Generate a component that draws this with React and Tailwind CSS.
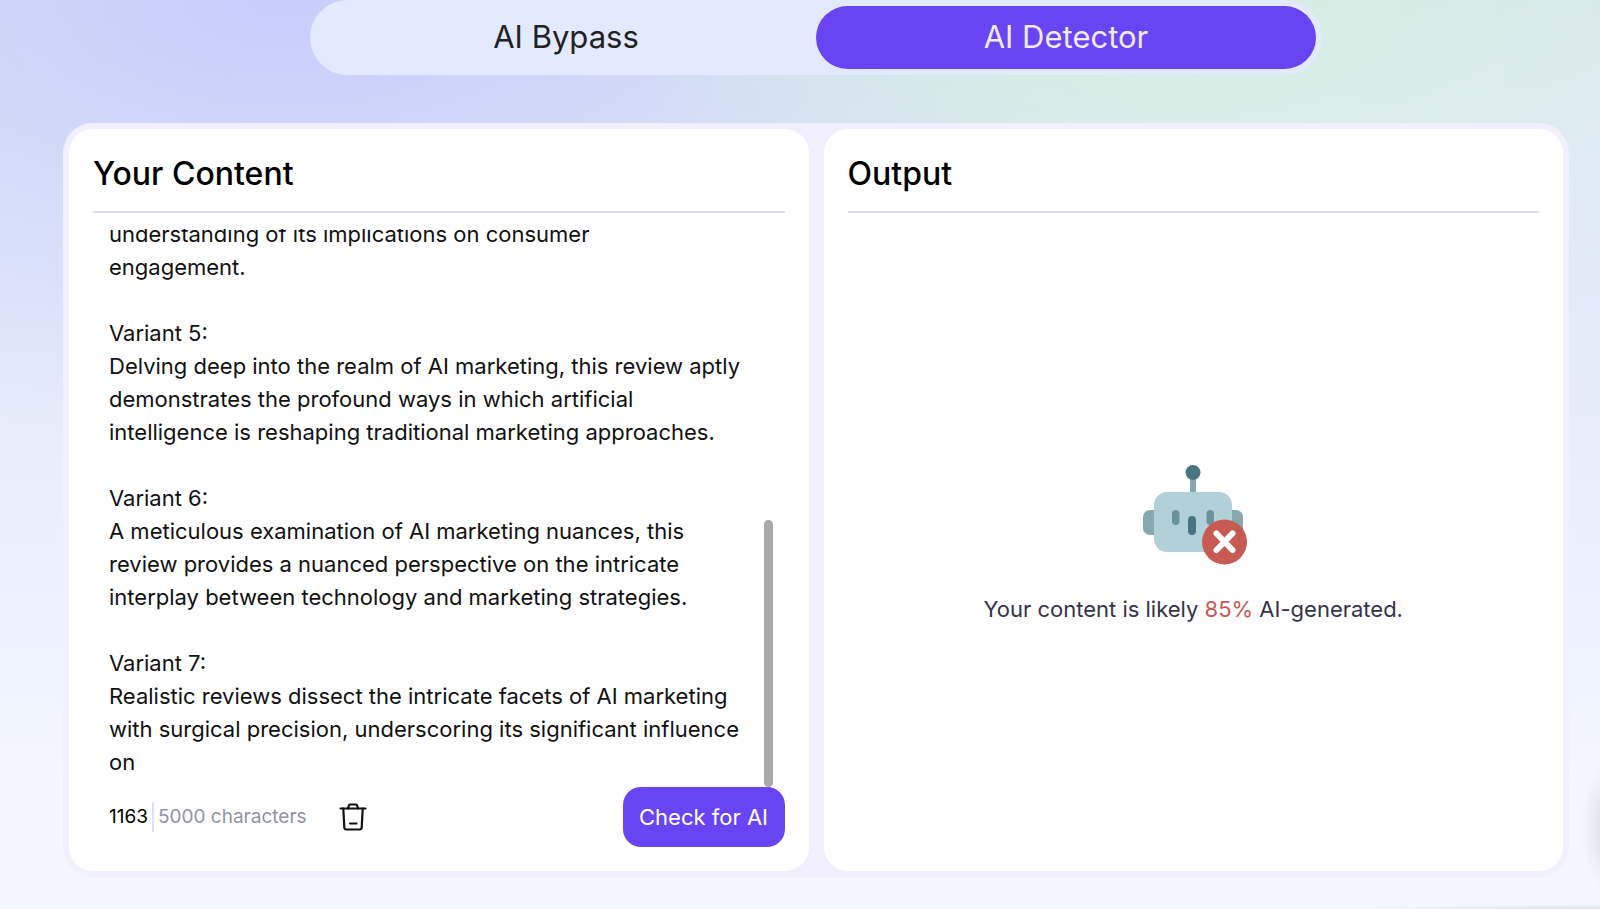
import React, { useEffect, useRef, useState } from 'react';

const SAMPLE_TEXT = `understanding of its implications on consumer
engagement.

Variant 5:
Delving deep into the realm of AI marketing, this review aptly
demonstrates the profound ways in which artificial
intelligence is reshaping traditional marketing approaches.

Variant 6:
A meticulous examination of AI marketing nuances, this
review provides a nuanced perspective on the intricate
interplay between technology and marketing strategies.

Variant 7:
Realistic reviews dissect the intricate facets of AI marketing
with surgical precision, underscoring its significant influence
on`;

const TABS = ['AI Bypass', 'AI Detector'];

const TrashIcon = () => (
  <svg width="28" height="28" viewBox="0 0 28 28" fill="none" stroke="#111" strokeWidth="2.2" strokeLinecap="round" strokeLinejoin="round">
    <path d="M1.500 5.500h25" />
    <path d="M9 5.500l.8-2.800c.2-.8.6-1.200 1.300-1.200h5.800c.7 0 1.100.4 1.300 1.200L19 5.500" />
    <path d="M4.300 5.500l1 19c.1 1.400.8 2 2 2h13.400c1.200 0 1.900-.6 2-2l1-19" />
    <path d="M11 20.500h6.500" />
  </svg>
);

const RobotIcon = () => (
  <svg width="100" height="100" viewBox="0 0 100 100" fill="none" className="overflow-visible">
    <rect x="47" y="10" width="6" height="22" fill="#86a8af" />
    <circle cx="50" cy="7.500" r="7.500" fill="#497580" />
    <rect x="0" y="45" width="24" height="25" rx="7" fill="#86a8af" />
    <rect x="76" y="45" width="24" height="25" rx="7" fill="#86a8af" />
    <rect x="11" y="27" width="78" height="60" rx="13" fill="#b1d0d7" />
    <rect x="29" y="45" width="7.500" height="15" rx="3.700" fill="#69929b" />
    <rect x="63.500" y="45" width="7.500" height="15" rx="3.700" fill="#69929b" />
    <rect x="45" y="51" width="8" height="19" rx="4" fill="#497580" />
    <circle cx="81.500" cy="77" r="22.500" fill="#c85a54" />
    <path d="M73.500 68.500l16 16.500M89.500 68.500l-16 16.500" stroke="#fff" strokeWidth="6" strokeLinecap="round" />
  </svg>
);

const Panel = ({ title, children }) => (
  <section className="flex min-w-0 flex-1 flex-col rounded-3xl bg-white p-6">
    <h2 className="border-b-2 border-[#dddaf3] pt-[2px] pb-[18px] text-[32px] leading-[38px] font-medium text-black">{title}</h2>
    {children}
  </section>
);

const App = () => {
  const [activeTab, setActiveTab] = useState('AI Detector');
  const [content, setContent] = useState(SAMPLE_TEXT);
  const textRef = useRef(null);

  // Keep the end of the text in view
  useEffect(() => {
    textRef.current.scrollTop = textRef.current.scrollHeight;
  }, []);

  return (
    <main className="min-h-screen overflow-hidden bg-[#f4f7ff] bg-[radial-gradient(ellipse_36px_70px_at_101%_91%,#d5d8df,transparent),radial-gradient(ellipse_330px_14px_at_100%_101%,#dcdfe6_60%,transparent),radial-gradient(ellipse_560px_260px_at_72%_0%,#d6efe0,transparent),radial-gradient(ellipse_900px_440px_at_18%_0%,#c8cdfd,transparent),linear-gradient(to_bottom,#dae9ee_0px,#dfecf4_150px,#e3eaf9_300px,#ebf0fd_550px,#f4f7ff_780px)] pr-4 pb-8 pl-12 font-['Inter',sans-serif]">
      <nav className="mx-auto flex w-full max-w-[1012px] rounded-full bg-[#e3e9fe] p-[6px]">
        {TABS.map((tab) => (
          <button
            key={tab}
            type="button"
            onClick={() => setActiveTab(tab)}
            className={`h-[63px] flex-1 rounded-full text-[31px] ${
              activeTab === tab ? 'bg-[#6844f2] text-[#efeaff]' : 'text-[#222]'
            }`}
          >
            {tab}
          </button>
        ))}
      </nav>

      <div className="mx-auto mt-12 flex w-full max-w-[1506px] gap-[15px] rounded-[30px] bg-[#f2f0fe] p-[6px]">
        <Panel title="Your Content">
          <div className="relative mt-4">
            <textarea
              ref={textRef}
              aria-label="Your Content"
              value={content}
              onChange={(e) => setContent(e.target.value)}
              className="block h-[558px] w-full resize-none overflow-hidden pr-8 pb-2 pl-4 text-[22px] leading-[33px] text-[#111] outline-none"
            />
            <div className="absolute right-3 bottom-0 h-[267px] w-[9px] rounded-full bg-[#a9a9a9]" />
          </div>
          <div className="flex items-center justify-between">
            <div className="flex items-center pl-4 text-[19px] leading-[30px]">
              <span className="pr-1 text-black">1163</span>
              <span className="border-l-2 border-[#e2dcfb] pl-1 text-[#9293a3]">5000 characters</span>
              <button type="button" aria-label="Clear text" onClick={() => setContent('')} className="ml-8">
                <TrashIcon />
              </button>
            </div>
            <button type="button" className="h-[60px] w-[162px] rounded-[18px] bg-[#6844f2] text-[22px] text-white">
              Check for AI
            </button>
          </div>
        </Panel>

        <Panel title="Output">
          <div className="flex flex-1 flex-col items-center justify-center gap-7 pt-[30px]">
            <RobotIcon />
            <p className="text-[22px] leading-[33px] text-[#33344a]">
              Your content is likely <span className="text-[#c85a54]">85%</span> AI-generated.
            </p>
          </div>
        </Panel>
      </div>
    </main>
  );
};

export default App;
